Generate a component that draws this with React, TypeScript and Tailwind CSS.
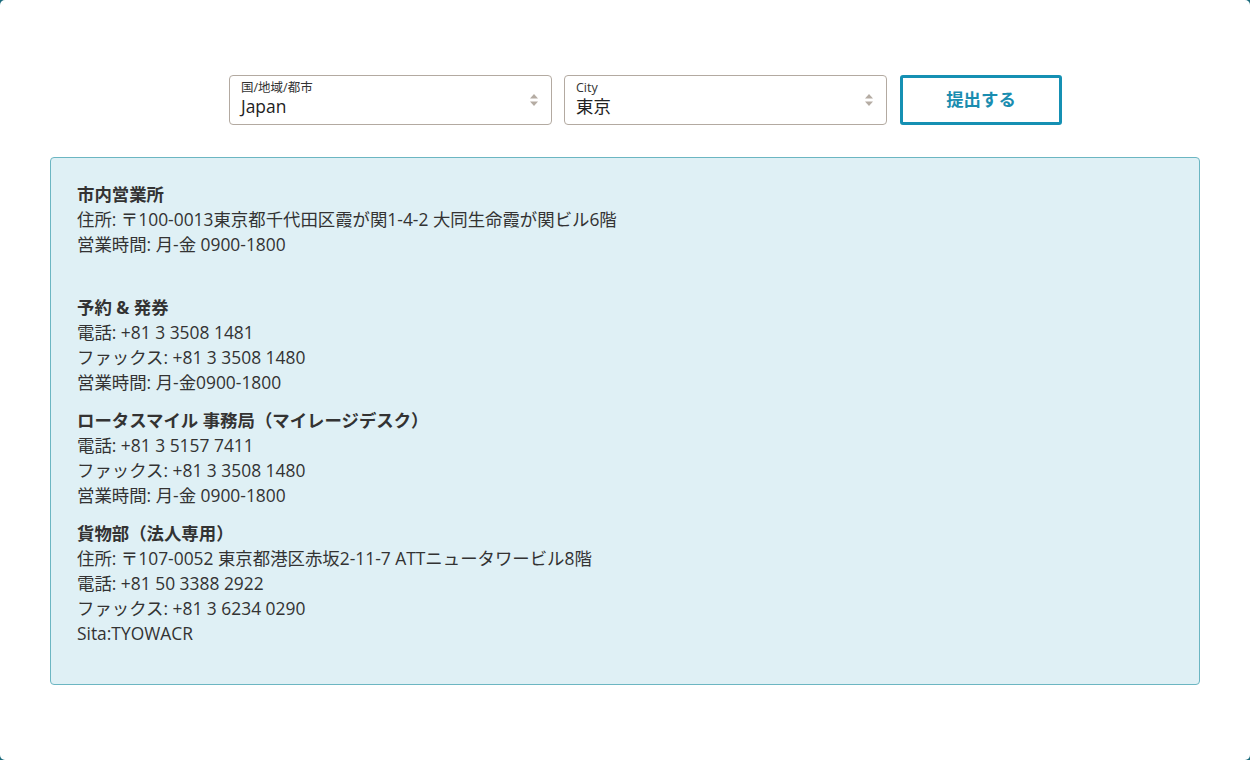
import React from 'react';

const sections: { title: string; lines: string[]; extraGap?: boolean }[] = [
  {
    title: '市内営業所',
    lines: ['住所: 〒100-0013東京都千代田区霞が関1-4-2 大同生命霞が関ビル6階', '営業時間: 月-金 0900-1800'],
    extraGap: true,
  },
  {
    title: '予約 & 発券',
    lines: ['電話: +81 3 3508 1481', 'ファックス: +81 3 3508 1480', '営業時間: 月-金0900-1800'],
  },
  {
    title: 'ロータスマイル 事務局（マイレージデスク）',
    lines: ['電話: +81 3 5157 7411', 'ファックス: +81 3 3508 1480', '営業時間: 月-金 0900-1800'],
  },
  {
    title: '貨物部（法人専用）',
    lines: [
      '住所: 〒107-0052 東京都港区赤坂2-11-7 ATTニュータワービル8階',
      '電話: +81 50 3388 2922',
      'ファックス: +81 3 6234 0290',
      'Sita:TYOWACR',
    ],
  },
];

const Arrows = () => (
  <svg width="10" height="14" viewBox="0 0 10 14" className="shrink-0">
    <path d="M5 1 L9 5.5 H1 Z" fill="#b5aca3" />
    <path d="M5 13 L9 8.5 H1 Z" fill="#b5aca3" />
  </svg>
);

const SelectBox: React.FC<{ label: string; value: string }> = ({ label, value }) => (
  <div className="w-[323px] h-[50px] rounded-[4px] border border-[#b3aaa1] bg-white flex items-center pl-[11px] pr-[12px]">
    <div className="flex-1 flex flex-col -mt-[3px]">
      <span className="text-[12.5px] leading-[15px] text-[#333]">{label}</span>
      <span className="text-[17.4px] leading-[23px] text-[#222]">{value}</span>
    </div>
    <Arrows />
  </div>
);

export default function App() {
  return (
    <div className="w-[1250px] h-[760px] bg-[#1b6b7c]" style={{ fontFamily: '"Open Sans", "Noto Sans CJK JP", sans-serif' }}>
      <div className="w-full h-full bg-white rounded-[5px] pt-[75px] px-[50px]">
        <div className="flex items-center gap-[12px] ml-[179px]">
          <SelectBox label="国/地域/都市" value="Japan" />
          <SelectBox label="City" value="東京" />
          <button className="w-[162px] h-[50px] ml-[1px] rounded-[3px] border-[3px] border-[#1590b3] bg-white text-[17.4px] leading-[22px] font-bold text-[#1a8db0] pb-[2px]">
            提出する
          </button>
        </div>

        <div className="mt-[32px] h-[528px] rounded-[4px] border border-[#6cb6c2] bg-[#dff0f5] pt-[24px] px-[26px] text-[17.4px] leading-[25px] text-[#333]">
          {sections.map((s) => (
            <div key={s.title} className="mb-[13px]">
              <div className="font-bold">{s.title}</div>
              {s.lines.map((l) => (
                <div key={l}>{l}</div>
              ))}
              {s.extraGap && <div className="h-[25px]" />}
            </div>
          ))}
        </div>
      </div>
    </div>
  );
}
